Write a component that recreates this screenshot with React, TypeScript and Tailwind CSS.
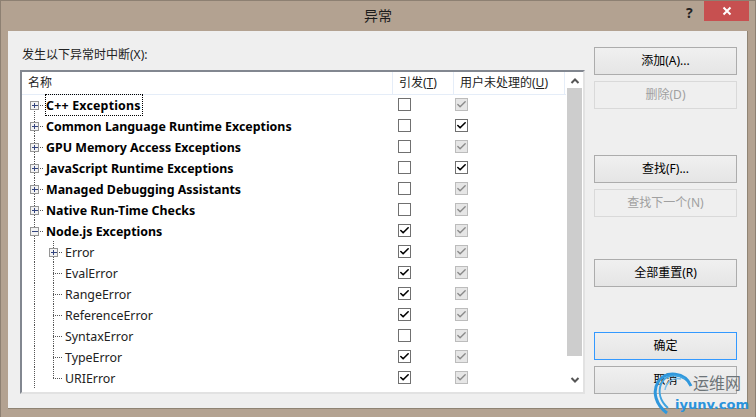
import { Check } from "lucide-react";

const FONT = "font-['Noto_Sans','Noto_Sans_CJK_SC',sans-serif]";

type Row = {
  label: string;
  level: 0 | 1;
  expander?: "plus" | "minus";
  last?: boolean;
  thrown: boolean;
  unhandledOn?: boolean;
  focus?: boolean;
};

const rows: Row[] = [
  { label: "C++ Exceptions", level: 0, expander: "plus", thrown: false, focus: true },
  { label: "Common Language Runtime Exceptions", level: 0, expander: "plus", thrown: false, unhandledOn: true },
  { label: "GPU Memory Access Exceptions", level: 0, expander: "plus", thrown: false },
  { label: "JavaScript Runtime Exceptions", level: 0, expander: "plus", thrown: false, unhandledOn: true },
  { label: "Managed Debugging Assistants", level: 0, expander: "plus", thrown: false },
  { label: "Native Run-Time Checks", level: 0, expander: "plus", thrown: false },
  { label: "Node.js Exceptions", level: 0, expander: "minus", thrown: true },
  { label: "Error", level: 1, expander: "plus", thrown: true },
  { label: "EvalError", level: 1, thrown: true },
  { label: "RangeError", level: 1, thrown: true },
  { label: "ReferenceError", level: 1, thrown: true },
  { label: "SyntaxError", level: 1, thrown: false },
  { label: "TypeError", level: 1, thrown: true },
  { label: "URIError", level: 1, last: true, thrown: true },
];

function TreeGutter({ row, first }: { row: Row; first: boolean }) {
  const dot = { stroke: "#555", strokeWidth: 1, strokeDasharray: "1 1" };
  const box = row.level === 0 ? 12.5 : 31.5;
  const width = row.level === 0 ? 24 : 43;
  return (
    <svg width={width} height="21" viewBox={`0 0 ${width} 21`} className="shrink-0">
      <line x1="12.5" y1={first ? 11 : 0} x2="12.5" y2="21" {...dot} />
      {row.level === 1 && <line x1="31.5" y1="0" x2="31.5" y2={row.last ? 11 : 21} {...dot} />}
      <line x1={box - 0.5} y1="11.5" x2={box + 9.5} y2="11.5" {...dot} />
      {row.expander && (
        <g>
          <rect x={box - 4} y="7.5" width="8" height="8" fill="#f3f3f3" stroke="#959595" />
          <line x1={box - 2.5} y1="11.5" x2={box + 3.5} y2="11.5" stroke="#34457e" />
          {row.expander === "plus" && <line x1={box} y1="9" x2={box} y2="14" stroke="#34457e" />}
        </g>
      )}
    </svg>
  );
}

function Box({ checked, disabled }: { checked: boolean; disabled?: boolean }) {
  return (
    <span
      className={`flex h-[13px] w-[13px] items-center justify-center border ${
        disabled ? "border-[#bcbcbc] bg-[#e6e6e6]" : "border-[#707070] bg-white"
      }`}
    >
      {checked && (
        <Check
          size={11}
          strokeWidth={disabled ? 3 : 3.5}
          className={disabled ? "text-[#8a8a8a]" : "text-black"}
        />
      )}
    </span>
  );
}

function Btn({ children, disabled, primary }: { children: string; disabled?: boolean; primary?: boolean }) {
  return (
    <button
      className={`h-[28px] w-[143px] border text-[12px] ${
        disabled
          ? "border-[#d9d9d9] bg-[#efefef] text-[#a0a0a0]"
          : primary
            ? "border-[#3399ff] bg-gradient-to-b from-[#f0f0f0] to-[#e5e5e5] text-black"
            : "border-[#acacac] bg-gradient-to-b from-[#f0f0f0] to-[#e5e5e5] text-black"
      }`}
    >
      {children}
    </button>
  );
}

export default function App() {
  return (
    <div className={`${FONT} relative h-[417px] w-[756px] overflow-hidden border-x border-t border-[#8d8072] bg-[#b3a291] text-black`}>
      {/* title bar */}
      <div className="relative flex h-[30px] items-center justify-center text-[14px] text-[#1c1c1c]">
        <span className="relative top-[-1px]">异常</span>
        <span className="absolute left-[685px] top-[1px] text-[14px] font-bold text-[#222]">?</span>
        <span className="absolute left-[703px] top-0 flex h-[20px] w-[45px] items-center justify-center bg-[#c75050] text-white">
          <svg width="10" height="10" viewBox="0 0 10 10">
            <path d="M1.5 1.5l7 7M8.5 1.5l-7 7" stroke="#fff" strokeWidth="2" />
          </svg>
        </span>
      </div>

      <div className="mx-[7px] flex h-[378px] gap-[9px] border-b border-r border-[#8f8474] bg-[#efefef] pl-[12px] pt-[14px]">
        <div className="flex w-[565px] flex-col">
          <div className="h-[25px] pl-[2px] text-[12px] leading-[20px] text-[#222]">发生以下异常时中断(X):</div>

          <div className="flex h-[324px] border-2 border-b-[#e2e2e2] border-l-[#828790] border-r-[#e2e2e2] border-t-[#828790] bg-white">
            <div className="flex min-w-0 flex-1 flex-col">
              {/* column headers */}
              <div className="flex h-[23px] shrink-0 border-b border-[#e5edf8] text-[12px] text-[#222]">
                <div className="w-[371px] border-r border-[#e5edf8] pl-[6px] leading-[22px]">名称</div>
                <div className="w-[61px] border-r border-[#e5edf8] pl-[6px] leading-[22px]">
                  引发(<span className="underline">T</span>)
                </div>
                <div className="w-[111px] border-r border-[#e5edf8] pl-[6px] leading-[22px]">
                  用户未处理的(<span className="underline">U</span>)
                </div>
              </div>

              <div className="-mt-px">
                {rows.map((row, i) => (
                  <div key={row.label} className="flex h-[21px] items-center">
                    <div className="flex w-[376px] items-center">
                      <TreeGutter row={row} first={i === 0} />
                      {row.level === 0 ? (
                        <span
                          className={`mt-[1px] whitespace-nowrap pt-[2px] text-[12.4px] font-bold leading-[18px] ${
                            row.focus ? "pr-[1px] tracking-[0.2px] outline-1 outline-dotted outline-black" : ""
                          }`}
                        >
                          {row.label}
                        </span>
                      ) : (
                        <span className="mt-[1px] whitespace-nowrap pt-[2px] text-[12.4px] leading-[18px] text-[#222]">
                          {row.label}
                        </span>
                      )}
                    </div>
                    <div className="flex w-[57px] shrink-0">
                      <Box checked={row.thrown} />
                    </div>
                    <Box checked disabled={!row.unhandledOn} />
                  </div>
                ))}
              </div>
            </div>

            {/* scrollbar */}
            <div className="flex w-[17px] shrink-0 flex-col items-center bg-white">
              <svg width="10" height="16" viewBox="0 0 10 16">
                <path d="M1.5 11l3.5-3.5 3.5 3.5" fill="none" stroke="#555" strokeWidth="2" />
              </svg>
              <div className="h-[268px] w-[15px] bg-[#cdcdcd]" />
              <svg width="10" height="24" viewBox="0 0 10 24" className="mt-auto">
                <path d="M1.5 10l3.5 3.5 3.5-3.5" fill="none" stroke="#555" strokeWidth="2" />
              </svg>
            </div>
          </div>
        </div>

        <div className="flex flex-col pt-[2px]">
          <Btn>添加(A)...</Btn>
          <div className="mt-[6px]"><Btn disabled>删除(D)</Btn></div>
          <div className="mt-[46px]"><Btn>查找(F)...</Btn></div>
          <div className="mt-[6px]"><Btn disabled>查找下一个(N)</Btn></div>
          <div className="mt-[42px]"><Btn>全部重置(R)</Btn></div>
          <div className="mt-[45px]"><Btn primary>确定</Btn></div>
          <div className="mt-[6px]"><Btn>取消</Btn></div>
        </div>
      </div>

      {/* watermark */}
      <div className="absolute left-[652px] top-[369px] h-[47px] w-[103px]">
        <svg width="42" height="47" viewBox="0 0 42 47" className="absolute left-0 top-0">
          <path d="M38 16C32 2 13 0 5 12-1 22 3 35 14 43" fill="none" stroke="#2f97dc" strokeWidth="3" />
          <path d="M32 9C23 3 12 5 8 14 5 22 7 31 15 38" fill="none" stroke="#3fa3e0" strokeWidth="2" />
          <path d="M28 9C19 7 13 13 12 20" fill="none" stroke="#7cc0ea" strokeWidth="1.5" />
        </svg>
        <span className="absolute left-[40px] top-[3px] text-[16px] leading-[20px] text-[#6d7478]">运维网</span>
        <span className="absolute left-[22px] top-[25px] whitespace-nowrap font-['DejaVu_Sans',sans-serif] text-[13px] font-bold leading-[20px] text-[#2a93dc]">iyunv.com</span>
      </div>
    </div>
  );
}
